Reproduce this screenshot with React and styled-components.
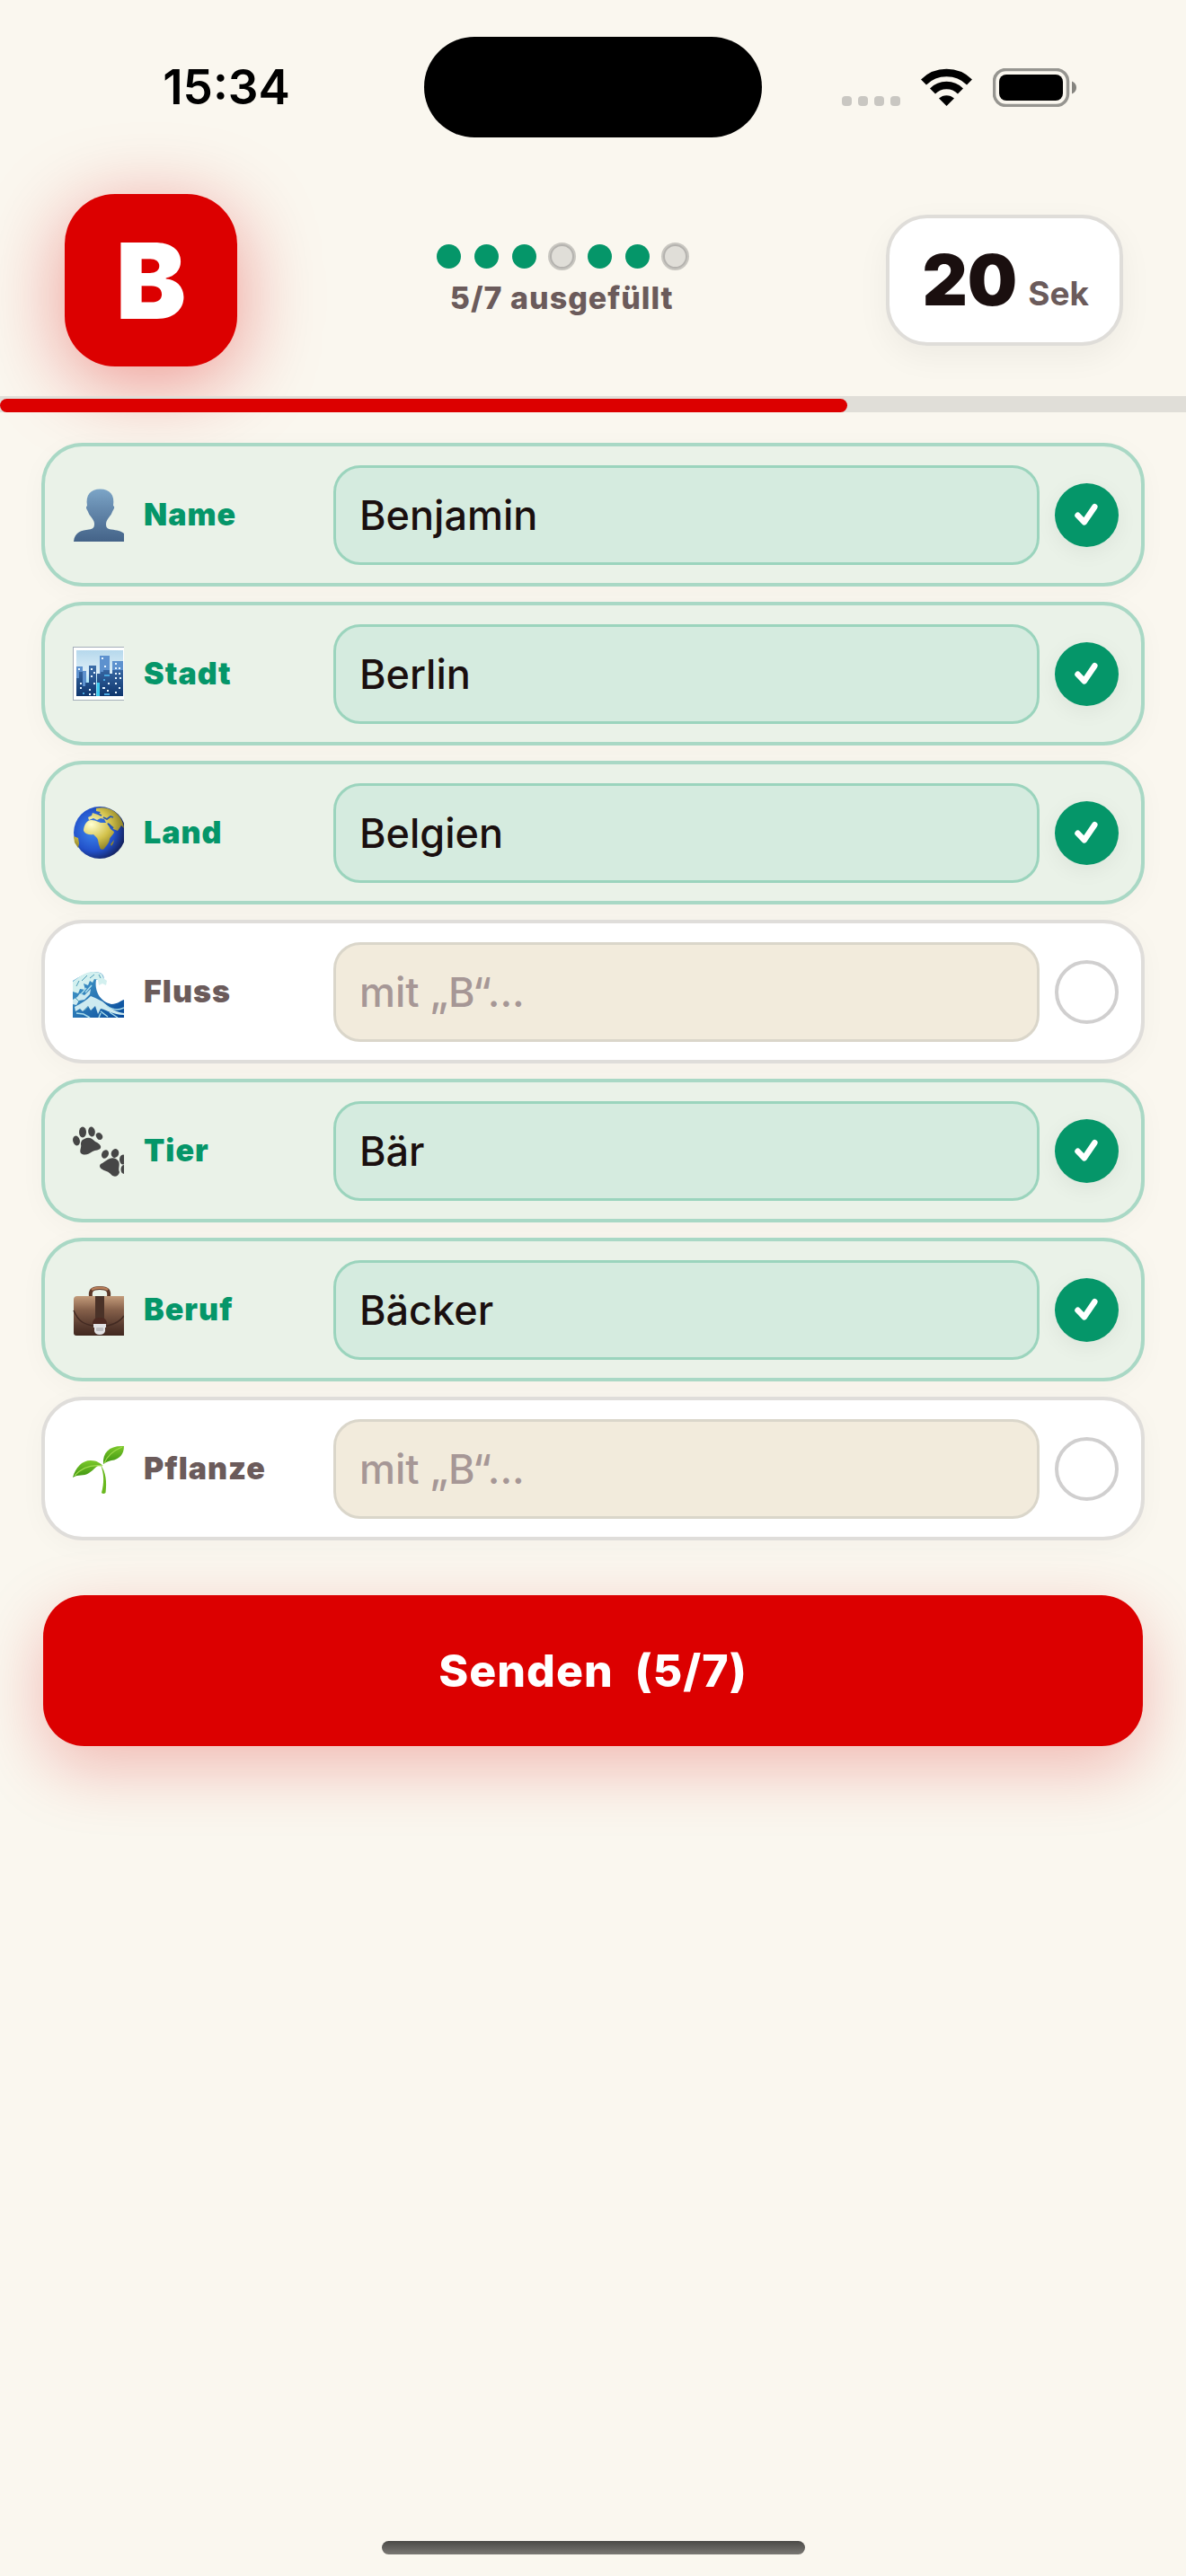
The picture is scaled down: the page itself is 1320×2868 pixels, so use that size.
import React, { useState } from "react";
import styled, { createGlobalStyle } from "styled-components";

const GlobalStyle = createGlobalStyle`
  body {
    margin: 0;
    background: #FAF7EF;
  }
  * {
    box-sizing: border-box;
  }
`;

const Screen = styled.div`
  min-height: 100vh;
  display: flex;
  flex-direction: column;
  overflow: hidden;
  background: #FAF7EF;
  color: #1A0F0F;
  font-family: Inter, "Liberation Sans", sans-serif;
`;

const StatusBar = styled.header`
  display: grid;
  grid-template-columns: 1fr 376px 1fr;
  align-items: center;
  padding-top: 41px;
  color: #000;
`;

const Clock = styled.time`
  font-size: 53px;
  line-height: 64px;
  font-weight: 600;
  justify-self: center;
  padding-left: 32px;
`;

const Island = styled.div`
  height: 112px;
  border-radius: 56px;
  background: #000;
`;

const StatusIcons = styled.div`
  display: flex;
  align-items: center;
  justify-self: end;
  gap: 23px;
  padding-right: 121px;
`;

const TopBar = styled.section`
  display: flex;
  align-items: center;
  justify-content: space-between;
  padding: 63px 70px 33px 72px;
`;

const LetterTile = styled.div`
  width: 192px;
  height: 192px;
  border-radius: 56px;
  display: flex;
  align-items: center;
  justify-content: center;
  background: #DC0000;
  color: #fff;
  font-size: 117px;
  font-weight: 900;
  box-shadow: 0 18px 90px rgba(220, 0, 0, 0.4);
`;

const Summary = styled.div`
  display: flex;
  flex-direction: column;
  align-items: center;
  gap: 13px;
`;

const Dots = styled.div`
  display: flex;
  gap: 15px;
`;

const Dot = styled.span`
  width: 27px;
  height: 27px;
  border-radius: 50%;
  ${props => props.$done ?
    `background: #059669;` :
    `background: #E0DED8; border: 2px solid #B5B3AF; box-shadow: 0 0 0 2px #C9C7C1;`
  }
`;

const SummaryText = styled.p`
  margin: 0;
  font-size: 34px;
  line-height: 40px;
  font-weight: 800;
  letter-spacing: 1px;
  color: #6B5B5B;
`;

const Timer = styled.div`
  height: 146px;
  display: flex;
  align-items: baseline;
  gap: 12px;
  padding: 24px 34px 24px 36px;
  border: 4px solid #DFDDD9;
  border-radius: 46px;
  background: #fff;
  box-shadow: 0 12px 36px rgba(0, 0, 0, 0.05);
`;

const Seconds = styled.span`
  font-size: 78px;
  line-height: 90px;
  font-weight: 900;
`;

const Unit = styled.span`
  font-size: 37px;
  font-weight: 700;
  color: #6B5B5B;
`;

const Track = styled.div`
  height: 18px;
  padding-top: 3px;
  background: #E0DED8;
`;

const Fill = styled.div`
  height: 15px;
  border-radius: 8px;
  background: #DC0000;
`;

const Form = styled.form`
  display: flex;
  flex-direction: column;
  gap: 17px;
  padding: 34px 46px;
`;

const Row = styled.div`
  display: flex;
  align-items: center;
  gap: 17px;
  height: 160px;
  padding: 0 25px 0 31px;
  border: 4px solid ${props => (props.$done ? "#A9D8C5" : "#DFDDDA")};
  border-radius: 46px;
  background: ${props => (props.$done ? "#EAF2E8" : "#fff")};
  box-shadow: 0 6px 30px rgba(60, 20, 20, 0.03);
`;

const Label = styled.label`
  display: flex;
  align-items: center;
  gap: 22px;
  width: 273px;
  font-size: 34px;
  line-height: 40px;
  font-weight: 900;
  letter-spacing: 1px;
  color: ${props => (props.$done ? "#059669" : "#6B5B5B")};
`;

const Answer = styled.input`
  flex: 1;
  min-width: 0;
  height: 111px;
  padding: 0 26px;
  border: 3px solid ${props => (props.$done ? "#9BD4BD" : "#DAD6CA")};
  border-radius: 30px;
  outline: none;
  background: ${props => (props.$done ? "#D5EBDF" : "#F2EBDC")};
  color: #1A0F0F;
  font-family: inherit;
  font-size: 45px;
  font-weight: 500;
  &::placeholder {
    color: #A69796;
    opacity: 1;
  }
`;

const Badge = styled.span`
  width: 71px;
  height: 71px;
  flex-shrink: 0;
  border-radius: 50%;
  ${props => props.$done ?
    `background: #059669; box-shadow: 0 6px 24px rgba(0, 0, 0, 0.06);` :
    `border: 4px solid #D0CFCF; background: #fff;`
  }
`;

const SendButton = styled.button`
  height: 168px;
  margin: 44px 2px 0;
  border: none;
  border-radius: 46px;
  background: #DC0000;
  color: #fff;
  font-family: inherit;
  font-size: 50px;
  font-weight: 800;
  letter-spacing: 1px;
  white-space: pre;
  cursor: pointer;
  box-shadow: 0 24px 72px rgba(220, 0, 0, 0.25);
`;

const HomeIndicator = styled.div`
  width: 471px;
  height: 15px;
  margin: auto auto 24px;
  border-radius: 8px;
  background: linear-gradient(#4B4A47, #7A7874);
`;

const Signal = () => (
  <svg width="65" height="43" viewBox="0 0 65 43" fill="#C9C7C2">
    <rect x="0" y="31" width="11" height="11" rx="4" />
    <rect x="18" y="31" width="11" height="11" rx="4" />
    <rect x="36" y="31" width="11" height="11" rx="4" />
    <rect x="54" y="31" width="11" height="11" rx="4" />
  </svg>
);

const Wifi = () => (
  <svg width="57" height="43" viewBox="0 0 57 43">
    <g fill="none" stroke="#000" strokeWidth="8.5">
      <path d="M3 15.5A36.5 36.5 0 0 1 54 15.5" />
      <path d="M13 25.5A22 22 0 0 1 44 25.5" />
    </g>
    <path d="M20 33.5A12.5 12.5 0 0 1 37 33.5L28.5 42Z" />
  </svg>
);

const Battery = () => (
  <svg width="94" height="43" viewBox="0 0 94 43">
    <rect x="1.5" y="1.5" width="82" height="40" rx="13" fill="none" stroke="#969590" strokeWidth="3.500" />
    <rect x="7" y="7" width="71" height="29" rx="8" />
    <path d="M88 14.5C91.500 16 93 18.500 93 21.500S91.500 27 88 28.500Z" fill="#85847F" />
  </svg>
);

const Check = () => (
  <svg width="71" height="71" viewBox="0 0 71 71" fill="none" stroke="#fff" strokeWidth="6.5" strokeLinecap="round" strokeLinejoin="round">
    <path d="M25.500 35.800L32.700 43.300L44.300 26.300" />
  </svg>
);

const PersonIcon = () => (
  <svg width="57" height="60" viewBox="0 0 57 60">
    <defs>
      <linearGradient id="person" x1="0" y1="0" x2="0" y2="1">
        <stop offset="0" stopColor="#7CA5C7" />
        <stop offset="0.4" stopColor="#6488AC" />
        <stop offset="1" stopColor="#446388" />
      </linearGradient>
    </defs>
    <path d="M1 60C2 49 10 47.500 18 46.500C23 46 24 44 24 40C24 37 22 35 20 32C17.500 29.500 17 26 15.500 24C14.500 22 15 21 16 20C14 8 20 1.500 30.500 1.500S47 8 45 20C46.500 21 46.500 22 45.500 24C44 26 43.500 29.500 41 32C39 35 37 37 37 40C37 44 38 46 43 46.500C49 47.500 54 48 57 51V60Z" fill="url(#person)" />
  </svg>
);

const CityIcon = () => (
  <svg width="57" height="60" viewBox="0 0 57 60">
    <defs>
      <linearGradient id="sky" x1="0" y1="0" x2="0" y2="1">
        <stop offset="0" stopColor="#B6D8EC" />
        <stop offset="0.5" stopColor="#DDEFF8" />
        <stop offset="1" stopColor="#5BD6F4" />
      </linearGradient>
      <linearGradient id="tower" x1="0" y1="0" x2="0" y2="1">
        <stop offset="0" stopColor="#3D6EA9" />
        <stop offset="1" stopColor="#0E356D" />
      </linearGradient>
    </defs>
    <rect width="57" height="60" fill="#A5AFBA" />
    <rect x="1" y="1" width="56" height="58" fill="#fff" />
    <rect x="4" y="4" width="52" height="51" fill="url(#sky)" />
    <path d="M4 22H11V27H15V55H4ZM30 10H41V55H30ZM44 16H56V55H44Z" fill="#5D91CE" />
    <path d="M4 35H7V28H11V44H14V40H18V21H26V55H4ZM27 30H31V28H34V26H41V30H44V26H56V55H27Z" fill="url(#tower)" />
    <path d="M27 40H30V55H27Z" fill="#3CC9EE" />
    <path d="M6 24h2v2H6zM20 24h2v2h-2zM23 28h2v2h-2zM20 32h2v2h-2zM8 40h2v2H8zM8 45h2v2H8zM23 40h2v2h-2zM18 47h2v2h-2zM18 52h2v2h-2zM23 52h2v2h-2zM32 12h2v2h-2zM35 21h2v2h-2zM33 45h3v2h-3zM39 40h2v2h-2zM38 48h2v2h-2zM47 18h2v2h-2zM47 23h2v2h-2zM51 23h2v2h-2zM47 29h2v2h-2zM51 29h2v2h-2zM47 34h2v2h-2zM52 34h2v2h-2zM47 40h2v2h-2zM51 45h2v2h-2zM47 50h2v2h-2z" fill="#E9F6FF" />
    <path d="M35 31h6v2h-6zM35 52h6v2h-6zM11 51h2v2h-2zM34 36h2v2h-2z" fill="#49A7E0" />
  </svg>
);

const EarthIcon = () => (
  <svg width="57" height="60" viewBox="0 0 57 60">
    <defs>
      <radialGradient id="ocean" cx="0.38" cy="0.45" r="0.62">
        <stop offset="0" stopColor="#3F8BF0" />
        <stop offset="0.65" stopColor="#2251CA" />
        <stop offset="1" stopColor="#14225E" />
      </radialGradient>
      <radialGradient id="land" cx="0.35" cy="0.4" r="0.75">
        <stop offset="0" stopColor="#FFFFD0" />
        <stop offset="0.5" stopColor="#D3C24C" />
        <stop offset="1" stopColor="#6E6516" />
      </radialGradient>
    </defs>
    <circle cx="30" cy="30" r="29" fill="url(#ocean)" />
    <path d="M17 17C20 15 25 16 27 17.500L31 19L38 19L42 26L46 29C46 32 42 34 41 37C41 41 37 45 35 48C32 50 30 48 30 46C28 42 29 39 27 36L23 32C19 33 14 32 12 28C12 24 14 19 17 17ZM26 3C33 1 42 3 47 7C53 12 56 18 57 25L54 22L50 28L45 26L41 20L37 19L35 15L31 14L27 16L23 14L18 16L17 13L21 11L22 8L28 10L31 7L26 6ZM42 43L46 38L45 42L43 45ZM1 34L6 36L7 42L6 47L2 41Z" fill="url(#land)" />
    <path d="M39 20L45 25M34 13L38 15L42 12L45 13M28 9L32 11M22 5L25 4" fill="none" stroke="#2757B6" strokeWidth="1.800" />
  </svg>
);

const WaveIcon = () => (
  <svg width="57" height="60" viewBox="0 0 57 60">
    <defs>
      <linearGradient id="water" x1="0" y1="0" x2="1" y2="1">
        <stop offset="0" stopColor="#4BA3CF" />
        <stop offset="1" stopColor="#06499A" />
      </linearGradient>
    </defs>
    <path d="M0 18C8 13 15 9 24 8C32 8 36 12 34 17L26 17C24 29 30 41 43 44C50 44 53 40 57 39V59H0Z" fill="url(#water)" />
    <path d="M0 19C7 14 13 8 23 8C31 8 34 11 34 15L38 18L37 23L33 21L29 23L28 17L24 16L22 20L19 18L17 23L12 21L14 28L8 27L6 32L0 30Z" fill="#D3F0EF" />
    <path d="M0 39L5 36L8 32L13 34L20 27L19 33L13 39L7 40L4 45L0 44ZM2 47C10 43 16 39 20 35L25 37L33 41C43 50 49 53 57 54V56C45 56 37 50 31 49L28 55L25 46L20 51L17 46L11 52L8 49L3 52Z" fill="#CDEAF0" />
    <path d="M15 26L9 33M21 23L14 31M38 46C45 51 51 51 57 48M31 52L39 58M41 53L50 59M4 54L12 55L19 59M29 59L31 54" fill="none" stroke="#A9DCEB" strokeWidth="1.500" />
    <path d="M16 12L10 18M24 11L19 15M29 11L31 15M7 18L4 24M3 37L8 42M17 47L13 51" fill="none" stroke="#4D9DB8" strokeWidth="1" />
  </svg>
);

const PawsIcon = () => (
  <svg width="57" height="60" viewBox="0 0 57 60" fill="#464646">
    <ellipse cx="4" cy="19" rx="3.800" ry="5.500" transform="rotate(-15 4 19)" />
    <ellipse cx="11" cy="9.500" rx="4" ry="6" />
    <ellipse cx="21" cy="9" rx="3.800" ry="5.500" transform="rotate(-10 21 9)" />
    <ellipse cx="29.500" cy="14" rx="3.300" ry="4.200" transform="rotate(-35 29.500 14)" />
    <path d="M13 17C18 14 22 17 25 20C29 22 32 24 31 27C30 30 25 29 22 31C18 34 13 36 9 33C7 30 10 27 9 23C9 20 10 18 13 17Z" />
    <ellipse cx="36" cy="34" rx="3.800" ry="5" transform="rotate(25 36 34)" />
    <ellipse cx="47" cy="33" rx="4.200" ry="5" transform="rotate(20 47 33)" />
    <ellipse cx="56" cy="40" rx="4" ry="5.500" />
    <ellipse cx="57" cy="51" rx="3.500" ry="5" />
    <path d="M41 39C45 37 49 39 51 42C53 46 50 50 52 54C51 59 46 60 43 57C40 53 36 53 33 51C29 49 29 45 33 44C36 42 38 40 41 39Z" />
  </svg>
);

const BriefcaseIcon = () => (
  <svg width="57" height="60" viewBox="0 0 57 60">
    <defs>
      <linearGradient id="leather" x1="0" y1="0" x2="0" y2="1">
        <stop offset="0" stopColor="#C39B7A" />
        <stop offset="0.35" stopColor="#85604A" />
        <stop offset="0.75" stopColor="#573A2E" />
        <stop offset="1" stopColor="#41281F" />
      </linearGradient>
    </defs>
    <path d="M20 16C19 9 21 6 30 6S41 9 40 16" fill="none" stroke="#5D3828" strokeWidth="4" />
    <path d="M21 8C25 5 35 5 39 8" fill="none" stroke="#B87F5A" strokeWidth="2.500" />
    <path d="M1 19Q1 15 5 15H57V59H4Q1 59 1 56Z" fill="url(#leather)" />
    <path d="M1 31C6 43 12 46 22 48H39C48 46 53 43 57 37" fill="none" stroke="#422A22" strokeWidth="1.500" />
    <rect x="25" y="15" width="10" height="27" fill="#4A3228" />
    <path d="M22 46C22 40 26 39 30 39S38 40 38 46Z" fill="#4D2A22" />
    <path d="M23 46H37V50H36V54Q35 58 30 58T24 54V50H23Z" fill="#E2E2E4" />
    <rect x="26" y="50" width="8" height="4" rx="1" fill="#C0C0C3" />
  </svg>
);

const SeedlingIcon = () => (
  <svg width="57" height="60" viewBox="0 0 57 60">
    <defs>
      <linearGradient id="leaf" x1="0" y1="0" x2="0" y2="1">
        <stop offset="0" stopColor="#7CC82B" />
        <stop offset="1" stopColor="#3D9410" />
      </linearGradient>
    </defs>
    <path d="M31 26C37 34 38 45 36.500 57Q34 59 32 57C35 46 35 36 31 26Z" fill="#69B81E" />
    <path d="M0 40C3 29 10 21 20 21C27 21 30 24 34 27C26 25 25 31 18 35C12 39 6 36 0 40Z" fill="url(#leaf)" />
    <path d="M34 25C33 12 41 4 57 5C57 14 52 20 43 21C38 22 36 24 34 25Z" fill="url(#leaf)" />
    <path d="M2 38C10 29 19 25 33 27M35 24C38 17 45 10 55 6" fill="none" stroke="#A1DC4E" strokeWidth="1.200" />
  </svg>
);

const categories = [
  { id: "name", label: "Name", Icon: PersonIcon },
  { id: "stadt", label: "Stadt", Icon: CityIcon },
  { id: "land", label: "Land", Icon: EarthIcon },
  { id: "fluss", label: "Fluss", Icon: WaveIcon },
  { id: "tier", label: "Tier", Icon: PawsIcon },
  { id: "beruf", label: "Beruf", Icon: BriefcaseIcon },
  { id: "pflanze", label: "Pflanze", Icon: SeedlingIcon },
];

const App = () => {
  const [answers, setAnswers] = useState({
    name: "Benjamin",
    stadt: "Berlin",
    land: "Belgien",
    fluss: "",
    tier: "Bär",
    beruf: "Bäcker",
    pflanze: "",
  });

  const total = categories.length;
  const filled = categories.filter(({ id }) => answers[id]).length;

  const handleChange = (e) => {
    setAnswers({ ...answers, [e.target.name]: e.target.value });
  };

  return (
    <>
      <GlobalStyle />
      <Screen>
        <StatusBar>
          <Clock>15:34</Clock>
          <Island />
          <StatusIcons>
            <Signal />
            <Wifi />
            <Battery />
          </StatusIcons>
        </StatusBar>
        <TopBar>
          <LetterTile>B</LetterTile>
          <Summary>
            <Dots>
              {categories.map(({ id }) => <Dot key={id} $done={!!answers[id]} />)}
            </Dots>
            <SummaryText>{filled}/{total} ausgefüllt</SummaryText>
          </Summary>
          <Timer>
            <Seconds>20</Seconds>
            <Unit>Sek</Unit>
          </Timer>
        </TopBar>
        <Track>
          <Fill style={{ width: `${(filled / total) * 100}%` }} />
        </Track>
        <Form onSubmit={(e) => e.preventDefault()}>
          {categories.map(({ id, label, Icon }) => {
            const done = !!answers[id];
            return (
              <Row key={id} $done={done}>
                <Label htmlFor={id} $done={done}>
                  <Icon />
                  {label}
                </Label>
                <Answer
                  id={id}
                  name={id}
                  value={answers[id]}
                  placeholder="mit „B“..."
                  autoComplete="off"
                  onChange={handleChange}
                  $done={done}
                />
                <Badge $done={done}>{done && <Check />}</Badge>
              </Row>
            );
          })}
          <SendButton type="submit">{`Senden  (${filled}/${total})`}</SendButton>
        </Form>
        <HomeIndicator />
      </Screen>
    </>
  );
};

export default App;
